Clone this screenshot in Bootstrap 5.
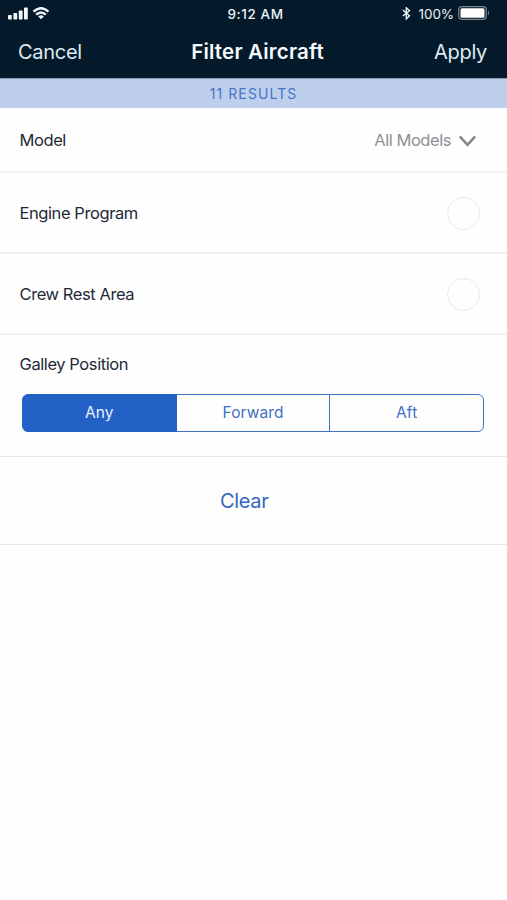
<!DOCTYPE html>
<html lang="en">
<head>
<meta charset="utf-8">
<meta name="viewport" content="width=device-width, initial-scale=1">
<title>Filter Aircraft</title>
<link href="https://cdn.jsdelivr.net/npm/bootstrap@5.3.0/dist/css/bootstrap.min.css" rel="stylesheet">
<style>
  body { font-family: Inter, "Liberation Sans", sans-serif; color: #1f2a37; background: #fefefe; }
  .app-head { background: #041a2a; color: #e9f2f8; height: 78px; }
  .status-line { height: 28px; padding: 0 17px 0 8px; font-size: 13.5px; line-height: 28px; }
  .side-cell { flex: 1 1 0; }
  .clock { font-weight: 500; letter-spacing: .6px; margin-left: 13px; }
  .battery-text { letter-spacing: -.1px; }
  .title-line { height: 48px; padding: 0 20px 0 18px; }
  .title-line .btn { font-size: 20px; color: #dfeaf3; line-height: 48px; letter-spacing: -.3px; }
  .page-title { font-size: 20.5px; font-weight: 600; line-height: 48px; letter-spacing: .2px; margin: 0 0 0 10px; color: #f5faff; }
  .result-strip { height: 30px; line-height: 29px; background: #becfee; border-top: 1px solid #8b9bb5; color: #4a74c6; font-size: 14px; letter-spacing: 1.1px; }
  .filter-row { padding: 0 27px 0 19.5px; border-bottom: 2px solid #f0f1f2; font-size: 16.5px; letter-spacing: -.42px; }
  .row-model { height: 65px; padding-top: 2px; padding-right: 31px; }
  .row-toggle { height: 81px; padding-top: 2px; }
  .row-galley { height: 122px; padding: 17px 22px 0 19.5px; border-bottom-width: 1px; border-bottom-color: #e8e9ea; }
  .row-clear { height: 88px; padding-right: 38px; border-bottom-width: 1px; border-bottom-color: #e8e9ea; }
  .model-value { color: #8e9193; letter-spacing: -.45px; }
  .ring { width: 33px; height: 33px; border: 1.5px solid #e9e9ea; }
  .segments { height: 38px; margin: 17px 1px 0 2.5px; }
  .segments .btn { --bs-btn-color: #4270c2; --bs-btn-border-color: #4270c2; --bs-btn-active-bg: #2361c6; --bs-btn-active-border-color: #2361c6; --bs-btn-active-color: #e9f1ff; --bs-btn-border-radius: 6px; flex: 1 1 0; font-size: 15.5px; line-height: 36px; letter-spacing: .1px; }
  .clear-link { color: #3466bf; font-size: 20px; letter-spacing: -.3px; }
</style>
</head>
<body>
<header class="app-head">
  <div class="status-line d-flex align-items-center">
    <div class="side-cell d-flex align-items-center">
      <svg width="20" height="14" viewBox="0 0 20 14" fill="#f2f7fa"><rect x="0" y="8" width="3.8" height="4.500" rx=".8"/><rect x="5.4" y="6" width="3.8" height="6.500" rx=".8"/><rect x="10.8" y="3.5" width="3.8" height="9" rx=".8"/><rect x="16" y=".5" width="3.8" height="12" rx=".8"/></svg>
      <svg class="ms-1" width="18" height="14" viewBox="0 0 18 14" fill="none" stroke="#f2f7fa" stroke-width="2.4"><path d="M1.500 4.700Q9-2.300 16.500 4.700M4.200 7.700Q9 3.300 13.800 7.700"/><path d="M9 12.300 6.200 9.500Q9 7.100 11.800 9.500Z" fill="#f2f7fa" stroke="none"/></svg>
    </div>
    <span class="clock">9:12 AM</span>
    <div class="side-cell d-flex align-items-center justify-content-end">
      <svg width="9" height="14" viewBox="0 0 9 14" fill="none" stroke="#e9f2f8" stroke-width="1.4"><path d="M.8 3 7.500 8.800 4.300 11.800V.7L7.500 3.700.8 9"/></svg>
      <span class="battery-text ms-1 ps-1">100%</span>
      <svg class="ms-1" width="32" height="16" viewBox="0 0 32 16"><rect x=".7" y=".7" width="27.600" height="12.600" rx="3" fill="none" stroke="#78848d" stroke-width="1.300"/><rect x="2.500" y="2.300" width="24" height="9.400" rx="1.500" fill="#fff"/><path d="M30 4.500Q32 7 30 9.500Z" fill="#78848d"/></svg>
    </div>
  </div>
  <div class="title-line d-flex align-items-center">
    <div class="side-cell"><button type="button" class="btn border-0 p-0">Cancel</button></div>
    <h1 class="page-title">Filter Aircraft</h1>
    <div class="side-cell text-end"><button type="button" class="btn border-0 p-0">Apply</button></div>
  </div>
</header>
<div class="result-strip text-center">11 RESULTS</div>
<main>
  <div class="filter-row row-model d-flex align-items-center justify-content-between">
    <span>Model</span>
    <span class="model-value d-flex align-items-center">All Models
      <svg class="ms-2" width="17" height="12" viewBox="0 0 17 12" fill="none" stroke="#86898b" stroke-width="2.600"><path d="M.8 1.500 8.500 9.800 16.200 1.500"/></svg>
    </span>
  </div>
  <div class="filter-row row-toggle d-flex align-items-center justify-content-between">
    <span>Engine Program</span><span class="ring rounded-circle"></span>
  </div>
  <div class="filter-row row-toggle d-flex align-items-center justify-content-between">
    <span>Crew Rest Area</span><span class="ring rounded-circle"></span>
  </div>
  <div class="filter-row row-galley">
    <div>Galley Position</div>
    <div class="segments btn-group d-flex" role="group" aria-label="Galley Position">
      <button type="button" class="btn active p-0">Any</button>
      <button type="button" class="btn p-0">Forward</button>
      <button type="button" class="btn p-0">Aft</button>
    </div>
  </div>
  <div class="filter-row row-clear d-flex align-items-center justify-content-center">
    <button type="button" class="btn border-0 p-0 clear-link">Clear</button>
  </div>
</main>
<script src="https://cdn.jsdelivr.net/npm/bootstrap@5.3.0/dist/js/bootstrap.bundle.min.js"></script>
</body>
</html>
